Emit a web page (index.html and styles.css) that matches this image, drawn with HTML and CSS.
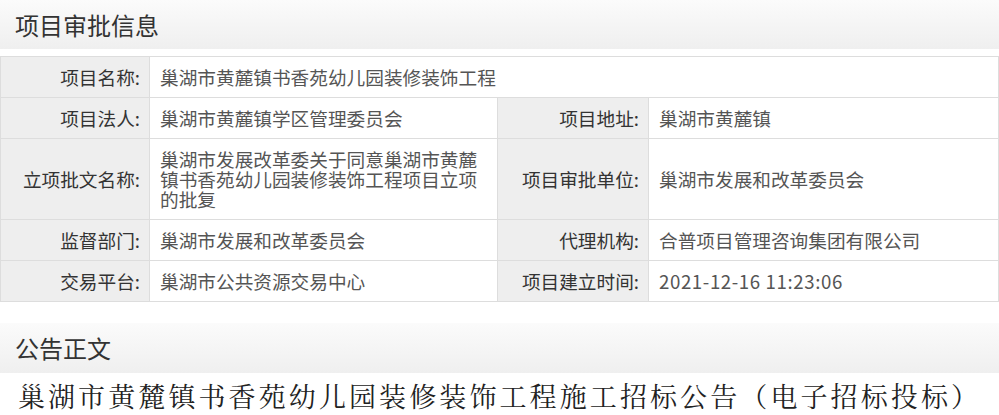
FILE: index.html
```html
<!DOCTYPE html>
<html lang="zh-CN">
<head>
<meta charset="utf-8">
<link rel="stylesheet" href="styles.css">
</head>
<body>
<div class="page">
  <div class="section-head">项目审批信息</div>
  <table class="info">
    <colgroup>
      <col class="c-label1"><col class="c-val1"><col class="c-label2"><col class="c-val2">
    </colgroup>
    <tr>
      <th>项目名称:</th>
      <td colspan="3">巢湖市黄麓镇书香苑幼儿园装修装饰工程</td>
    </tr>
    <tr>
      <th>项目法人:</th>
      <td>巢湖市黄麓镇学区管理委员会</td>
      <th>项目地址:</th>
      <td>巢湖市黄麓镇</td>
    </tr>
    <tr>
      <th>立项批文名称:</th>
      <td>巢湖市发展改革委关于同意巢湖市黄麓镇书香苑幼儿园装修装饰工程项目立项的批复</td>
      <th>项目审批单位:</th>
      <td>巢湖市发展和改革委员会</td>
    </tr>
    <tr>
      <th>监督部门:</th>
      <td>巢湖市发展和改革委员会</td>
      <th>代理机构:</th>
      <td>合普项目管理咨询集团有限公司</td>
    </tr>
    <tr>
      <th>交易平台:</th>
      <td>巢湖市公共资源交易中心</td>
      <th>项目建立时间:</th>
      <td class="date">2021-12-16 11:23:06</td>
    </tr>
  </table>
  <div class="section-head second">公告正文</div>
  <h1 class="notice-title">巢湖市黄麓镇书香苑幼儿园装修装饰工程施工招标公告（电子招标投标）</h1>
</div>
</body>
</html>
```
FILE: styles.css
```css
html, body {
  margin: 0;
  padding: 0;
  background: #fff;
}
.page {
  width: 999px;
  font-family: "Noto Sans CJK SC", "Noto Sans", sans-serif;
  color: #333;
}
.section-head {
  height: 49px;
  line-height: 49px;
  padding-left: 15px;
  font-size: 24px;
  color: #333;
  background: linear-gradient(to bottom, #fbfbfb, #efefef);
}
.section-head.second {
  height: 50px;
  line-height: 50px;
  margin-top: 21px;
}
.info {
  margin-top: 7px;
  width: 998px;
  border-collapse: collapse;
  table-layout: fixed;
  font-size: 18.67px;
  line-height: 20px;
}
.c-label1 { width: 149px; }
.c-val1 { width: 348px; }
.c-label2 { width: 151px; }
.c-val2 { width: 350px; }
.info th,
.info td {
  border: 1px solid #dddddd;
  padding: 10px 9px 10px 10px;
  vertical-align: middle;
}
.info th {
  background: #eeeeee;
  font-weight: normal;
  text-align: right;
  color: #333;
}
.info td {
  text-align: left;
  color: #555;
}
.info td.date {
  letter-spacing: 0.6px;
}
.notice-title {
  margin: 5px 0 0;
  text-align: center;
  font-family: "Noto Serif CJK SC", "Liberation Serif", serif;
  font-weight: normal;
  font-size: 27px;
  letter-spacing: 3.1px;
  line-height: 36px;
  color: #222;
}
```
